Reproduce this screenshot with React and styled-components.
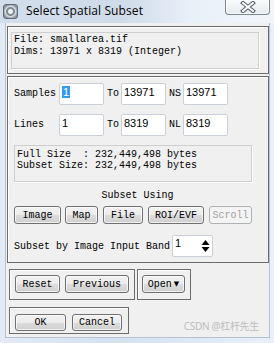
import styled, { createGlobalStyle } from "styled-components";

const Global = createGlobalStyle`
    html, body { margin: 0; padding: 0; background: #dde8f4; }
    * { box-sizing: border-box; }
`;

const mono = `"Liberation Mono", "DejaVu Sans Mono", monospace`;

export default function App() {
    return (
        <Window>
            <Global />
            <TitleBar>
                <TitleLeft>
                    <AppIcon />
                    <Title>Select Spatial Subset</Title>
                </TitleLeft>
                <CloseButton>
                    <svg width="16" height="12" viewBox="0 0 16 12">
                        <path d="M3 2 L13 10 M13 2 L3 10" stroke="#4d5563" strokeWidth="4" strokeLinecap="square" />
                        <path d="M3 2 L13 10 M13 2 L3 10" stroke="#ffffff" strokeWidth="2" strokeLinecap="square" />
                    </svg>
                </CloseButton>
            </TitleBar>

            <Client>
                <Group $h={48}>
                    <InfoBox>
                        <div>File: smallarea.tif</div>
                        <div>Dims: 13971 x 8319 (Integer)</div>
                    </InfoBox>
                </Group>

                <Group $h={187} $pad="6px 0 0 6px">
                    <RangeGrid>
                        <Label>Samples</Label>
                        <Field><Selected>1</Selected></Field>
                        <Label $ind>To</Label>
                        <Field>13971</Field>
                        <Label $ind>NS</Label>
                        <Field>13971</Field>

                        <Label>Lines</Label>
                        <Field>1</Field>
                        <Label $ind>To</Label>
                        <Field>8319</Field>
                        <Label $ind>NL</Label>
                        <Field>8319</Field>
                    </RangeGrid>

                    <SizeBox>
                        <div>Full Size&nbsp;&nbsp;: 232,449,498 bytes</div>
                        <div>Subset Size: 232,449,498 bytes</div>
                    </SizeBox>

                    <Caption>Subset Using</Caption>

                    <ButtonRow>
                        <Button $w={47}>Image</Button>
                        <Button $w={33} $ml={4}>Map</Button>
                        <Button $w={40} $ml={5}>File</Button>
                        <Button $w={56} $ml={5}>ROI/EVF</Button>
                        <Button $w={43} $ml={5} disabled>Scroll</Button>
                    </ButtonRow>

                    <BandRow>
                        <Label>Subset by Image Input Band</Label>
                        <SpinField>
                            <span>1</span>
                            <Spinner>
                                <svg width="9" height="14" viewBox="0 0 9 14">
                                    <path d="M0.5 6 L4.5 1 L8.5 6 Z" fill="#000" />
                                    <path d="M0.5 8 L4.5 13 L8.5 8 Z" fill="#000" />
                                </svg>
                            </Spinner>
                        </SpinField>
                    </BandRow>
                </Group>

                <GroupRow>
                    <Group $w={126} $h={31} $pad="5px 0 0 5px" $ml={2}>
                        <ButtonRow>
                            <Button $w={45}>Reset</Button>
                            <Button $w={64} $ml={5}>Previous</Button>
                        </ButtonRow>
                    </Group>
                    <Group $w={54} $h={31} $pad="5px 0 0 4px" $ml={2}>
                        <Button $w={43}>
                            Open<Caret>▼</Caret>
                        </Button>
                    </Group>
                </GroupRow>

                <Group $w={120} $h={27} $pad="6px 0 0 5px" $ml={2} $mt={7}>
                    <ButtonRow>
                        <Button $w={51} $h={17}>OK</Button>
                        <Button $w={50} $h={17} $ml={6}>Cancel</Button>
                    </ButtonRow>
                </Group>

                <Watermark>CSDN @杠杆先生</Watermark>
            </Client>
        </Window>
    );
}

const Window = styled.div`
    width: 274px;
    height: 343px;
    display: flex;
    flex-direction: column;
    background: linear-gradient(to right, #e3ecf6 0%, #d3e1f0 40%, #e8f0f8 100%);
    overflow: hidden;
`;

const TitleBar = styled.div`
    height: 23px;
    flex: none;
    display: flex;
    justify-content: space-between;
    align-items: flex-start;
    background: linear-gradient(to right, #d2deeb 0%, #cfdbe9 45%, #e9f0f8 70%, #f2f6fb 100%);
`;

const TitleLeft = styled.div`
    display: flex;
    align-items: center;
    gap: 8px;
    padding: 3px 0 0 3px;
`;

const AppIcon = styled.div`
    width: 15px;
    height: 15px;
    border-radius: 3px;
    background: radial-gradient(circle at 50% 50%, #eef1f4 0 2px, #7f8a96 3px 4px, #d9dee3 5px, #8d97a3 7px);
    border: 1px solid #5f6975;
`;

const Title = styled.span`
    font-family: "Open Sans", "Noto Sans", sans-serif;
    font-size: 12px;
    color: #000;
    line-height: 16px;
    letter-spacing: 0.1px;
`;

const CloseButton = styled.div`
    width: 45px;
    height: 16px;
    margin: -1px 4px 0 0;
    border: 1px solid #7a8596;
    border-top: none;
    border-radius: 0 0 4px 4px;
    background: linear-gradient(to bottom, #fbfcfd, #e6ebf1);
    box-shadow: inset 0 0 0 1px rgba(255, 255, 255, 0.8);
    display: flex;
    align-items: center;
    justify-content: center;
`;

const Client = styled.div`
    position: relative;
    height: 315px;
    margin: 0 4px 0 5px;
    padding: 3px 0 0 1px;
    background: #f0f0f0;
    border-left: 1px solid #b4c2d2;
    border-right: 1px solid #b4c2d2;
    border-bottom: 1px solid #b4c2d2;
    font-family: ${mono};
    font-size: 10px;
    color: #000;
`;

const Group = styled.div`
    width: ${(p) => (p.$w ? `${p.$w}px` : "262px")};
    height: ${(p) => p.$h}px;
    margin-left: ${(p) => p.$ml || 0}px;
    margin-top: ${(p) => (p.$mt !== undefined ? p.$mt : 2)}px;
    padding: ${(p) => p.$pad || "5px 9px 4px 3px"};
    border: 1px solid #6b6b6b;
    box-shadow: inset 1px 1px 0 #ffffff;
    &:first-child { margin-top: 0; }
`;

const GroupRow = styled.div`
    display: flex;
    margin-top: 6px;
    & > div { margin-top: 0; }
`;

const InfoBox = styled.div`
    height: 37px;
    padding: 1px 0 0 2px;
    border: 1px solid #cfcfcf;
    box-shadow: 1px 1px 0 #ffffff;
    line-height: 12px;
`;

const RangeGrid = styled.div`
    display: grid;
    grid-template-columns: 45px 45px 17px 45px 17px 45px;
    grid-auto-rows: 22px;
    row-gap: 9px;
    align-items: center;
`;

const Label = styled.span`
    padding-left: ${(p) => (p.$ind ? "3px" : "0")};
    white-space: nowrap;
    line-height: 12px;
`;

const Field = styled.div`
    height: 22px;
    padding: 2px 0 0 2px;
    background: #fff;
    border: 1px solid #c9d0d9;
    border-radius: 2px;
    font-family: "Liberation Sans", Arial, sans-serif;
    font-size: 11px;
    line-height: 13px;
`;

const Selected = styled.span`
    background: #3399ff;
    color: #fff;
    padding: 0 1px;
`;

const SizeBox = styled.div`
    width: 238px;
    height: 37px;
    margin-top: 9px;
    padding: 3px 0 0 2px;
    border: 1px solid #cfcfcf;
    box-shadow: 1px 1px 0 #ffffff;
    line-height: 11px;
`;

const Caption = styled.div`
    text-align: center;
    margin: 8px 7px 0 0;
    line-height: 12px;
`;

const ButtonRow = styled.div`
    display: flex;
    ${Caption} + & { margin-top: 4px; }
`;

const Button = styled.button`
    width: ${(p) => p.$w}px;
    height: ${(p) => p.$h || 18}px;
    margin: 0 0 0 ${(p) => p.$ml || 0}px;
    padding: 0;
    font-family: ${mono};
    font-size: 10px;
    color: #000;
    border: 1px solid #707070;
    border-radius: 3px;
    background: linear-gradient(to bottom, #f2f2f2 0%, #ebebeb 50%, #dddddd 51%, #cfcfcf 100%);
    box-shadow: inset 0 0 0 1px rgba(255, 255, 255, 0.7);
    display: flex;
    align-items: center;
    justify-content: center;
    &:disabled {
        color: #a0a0a0;
        border-color: #adb2b5;
        background: #f4f4f4;
        box-shadow: none;
    }
`;

const Caret = styled.span`
    font-family: "DejaVu Sans", sans-serif;
    font-size: 7px;
    margin-left: 2px;
`;

const BandRow = styled.div`
    display: flex;
    align-items: center;
    gap: 2px;
    margin-top: 11px;
    & > span { margin-top: 1px; }
`;

const SpinField = styled.div`
    width: 41px;
    height: 22px;
    display: flex;
    justify-content: space-between;
    align-items: center;
    padding-left: 2px;
    background: #fff;
    border: 1px solid #c9d0d9;
    border-radius: 2px;
    font-family: "Liberation Sans", Arial, sans-serif;
    font-size: 11px;
    & > span { align-self: flex-start; margin-top: 1px; }
`;

const Spinner = styled.div`
    width: 14px;
    height: 20px;
    display: flex;
    align-items: center;
    justify-content: center;
`;

const Watermark = styled.div`
    position: absolute;
    right: 10px;
    bottom: 4px;
    font-family: "Noto Sans", "Noto Sans CJK SC", sans-serif;
    font-size: 10px;
    color: #bdbdbd;
    letter-spacing: -0.3px;
`;
